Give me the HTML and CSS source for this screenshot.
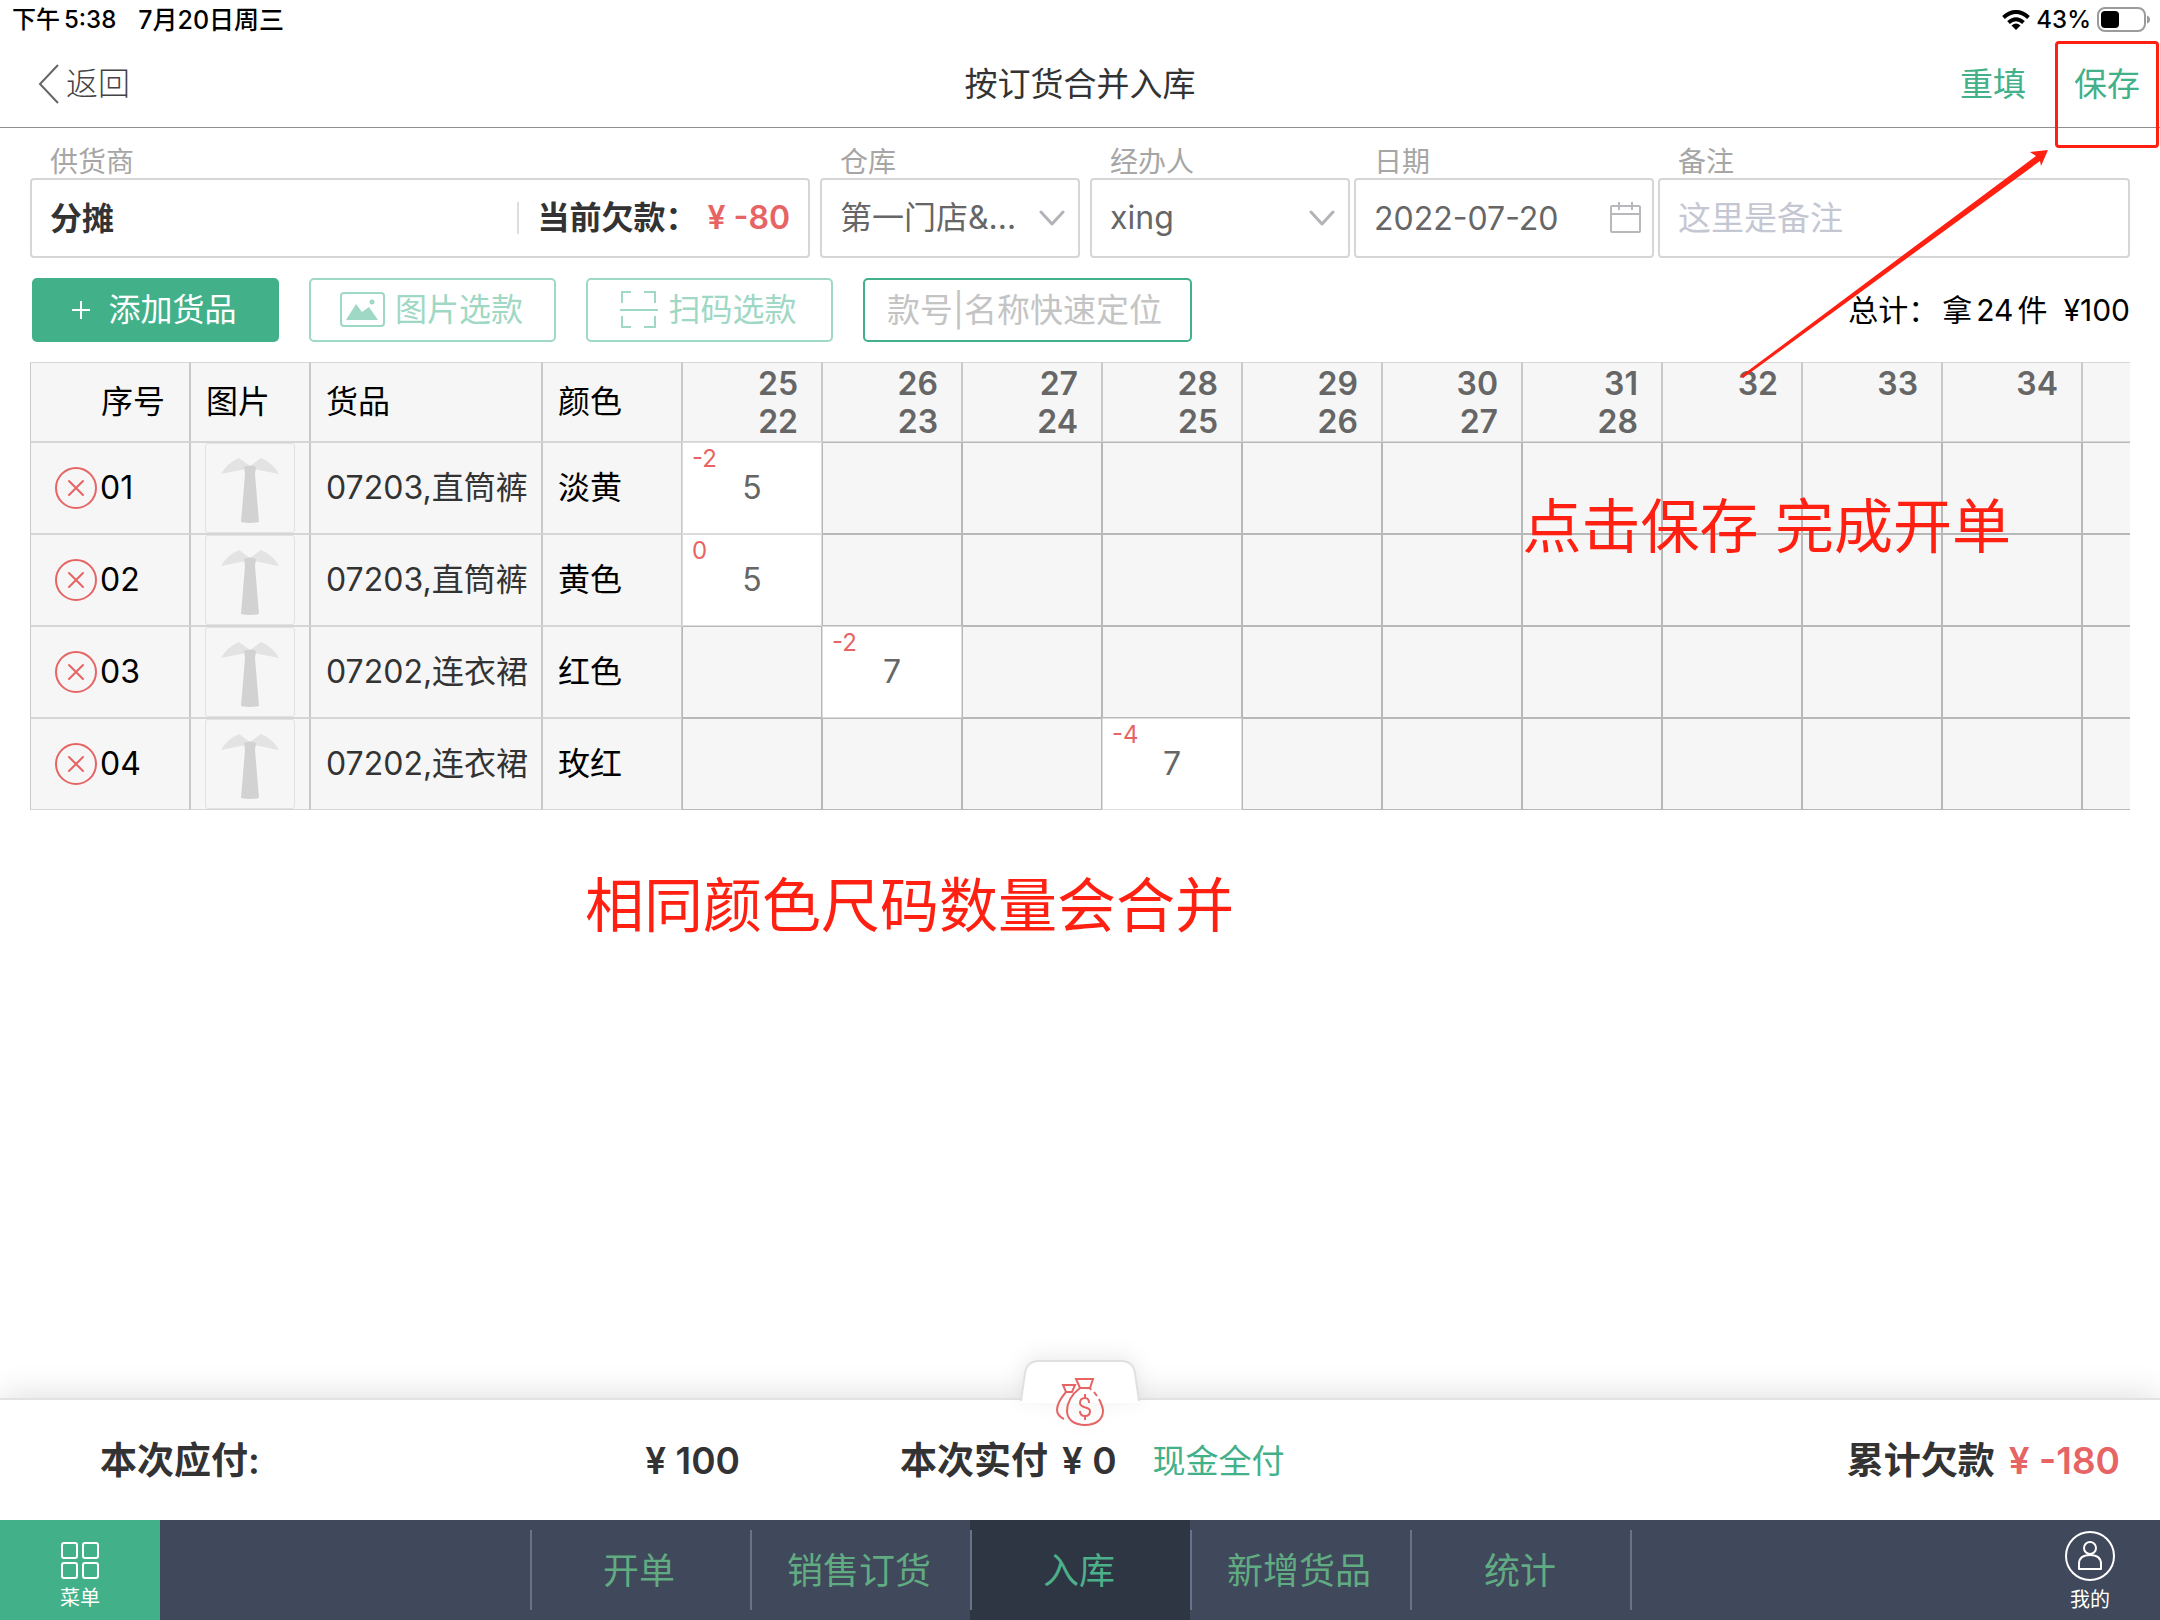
FILE: index.html
```html
<!DOCTYPE html>
<html lang="zh-CN">
<head>
<meta charset="utf-8">
<meta name="viewport" content="width=device-width, initial-scale=1">
<title>按订货合并入库</title>
<link rel="stylesheet" href="styles.css">
</head>
<body>
<svg class="defs" aria-hidden="true">
  <symbol id="tie" viewBox="0 0 88 88">
    <path d="M44 22 33 14Q21 19 15 30L40 25ZM44 22 55 14Q67 19 73 30L48 25Z" fill="#e3e3e3"/>
    <path d="M38 23Q44 20 50 23L49 30 53 78Q44 80 35 78L39 30Z" fill="#d2d2d2"/>
  </symbol>
  <symbol id="remove" viewBox="0 0 42 42">
    <circle cx="21" cy="21" r="20" fill="none" stroke="#e66464" stroke-width="2"/>
    <path d="M14 14 28 28M28 14 14 28" stroke="#e66464" stroke-width="2" stroke-linecap="round"/>
  </symbol>
  <symbol id="chevron" viewBox="0 0 26 16">
    <path d="M2 2 13 14 24 2" fill="none" stroke="#b2b3b8" stroke-width="3" stroke-linecap="round" stroke-linejoin="round"/>
  </symbol>
</svg>

<div class="page">
  <div class="status">
    <div class="status-group status-time"><span>下午</span><span>5:38</span><span class="status-date">7月20日周三</span></div>
    <div class="status-group status-system">
      <svg width="28" height="20" viewBox="0 0 28 20" fill="none" stroke="#000" stroke-width="4" aria-label="Wi-Fi">
        <path d="M1.5 7.5Q14-3.500 26.500 7.500M6.500 12.500Q14 6 21.500 12.500"/>
        <path d="M14 20 9.500 15.500Q14 11.500 18.500 15.500Z" fill="#000" stroke="none"/>
      </svg>
      <span>43%</span>
      <svg width="54" height="26" viewBox="0 0 54 26" aria-label="电量">
        <rect x="1" y="1" width="47" height="23" rx="7" fill="none" stroke="#9b9b9b" stroke-width="2"/>
        <rect x="4" y="4" width="18" height="17" rx="4"/>
        <path d="M50 8.500Q53 9.500 53 12.500 53 15.500 50 16.500Z" fill="#9b9b9b"/>
      </svg>
    </div>
  </div>

  <header class="header">
    <a class="back" href="#back">
      <svg width="22" height="40" viewBox="0 0 22 40" fill="none" stroke="#666" stroke-width="2"><path d="M20 1 2 20 20 39"/></svg>
      <span>返回</span>
    </a>
    <h1 class="title">按订货合并入库</h1>
    <div class="header-actions">
      <button type="button" class="text-button">重填</button>
      <button type="button" class="text-button">保存</button>
    </div>
  </header>

  <main class="main">
    <form class="fields">
      <div class="field field-supplier">
        <label for="supplier">供货商</label>
        <div class="box">
          <input id="supplier" class="strong" type="text" value="分摊">
          <div class="debt"><span>当前欠款：</span><span class="red">¥ -80</span></div>
        </div>
      </div>
      <div class="field field-store">
        <label for="store">仓库</label>
        <div class="box">
          <select id="store"><option>第一门店&amp;…</option></select>
          <svg class="chevron" width="26" height="16"><use href="#chevron"/></svg>
        </div>
      </div>
      <div class="field field-handler">
        <label for="handler">经办人</label>
        <div class="box">
          <select id="handler"><option>xing</option></select>
          <svg class="chevron" width="26" height="16"><use href="#chevron"/></svg>
        </div>
      </div>
      <div class="field field-date">
        <label for="date">日期</label>
        <div class="box">
          <input id="date" type="text" value="2022-07-20">
          <svg class="calendar" width="32" height="32" viewBox="0 0 32 32" fill="none" stroke="#b6b8bc" stroke-width="2"><rect x="1" y="4" width="29" height="26" rx="1"/><path d="M1 12H30M9 0V8M22 0V8"/></svg>
        </div>
      </div>
      <div class="field field-remark">
        <label for="remark">备注</label>
        <div class="box"><input id="remark" type="text" placeholder="这里是备注"></div>
      </div>
    </form>

    <div class="toolbar">
      <button type="button" class="tool tool-primary"><svg width="18" height="18" viewBox="0 0 18 18" stroke="#fff" stroke-width="2"><path d="M0 9H18M9 0V18"/></svg><span>添加货品</span></button>
      <button type="button" class="tool">
        <svg width="45" height="36" viewBox="0 0 45 36" fill="none" stroke="#9fd8c4" stroke-width="2"><rect x="1" y="1" width="43" height="33" rx="3"/><path d="M6 28 16 12 22 20 29 15 38 28Z" fill="#9fd8c4" stroke="none"/><circle cx="32" cy="10" r="2.500" fill="#9fd8c4" stroke="none"/></svg>
        <span>图片选款</span>
      </button>
      <button type="button" class="tool">
        <svg width="38" height="38" viewBox="0 0 38 38" fill="none" stroke="#9fd8c4" stroke-width="2"><path d="M11 1H2V12M24 1H35V12M2 25V36H11M24 36H35V25M0 19H38"/></svg>
        <span>扫码选款</span>
      </button>
      <input class="search" type="text" aria-label="快速定位" placeholder="款号|名称快速定位">
      <p class="summary"><span>总计：</span><span>拿</span><span>24</span><span>件</span><span class="amount">¥100</span></p>
    </div>

    <div class="table-wrap">
      <table class="goods">
        <colgroup><col class="c-no"><col class="c-pic"><col class="c-name"><col class="c-color"><col span="11" class="c-size"></colgroup>
        <thead>
          <tr>
            <th class="no">序号</th><th>图片</th><th>货品</th><th>颜色</th>
            <th class="size">25<br>22</th><th class="size">26<br>23</th><th class="size">27<br>24</th><th class="size">28<br>25</th><th class="size">29<br>26</th><th class="size">30<br>27</th><th class="size">31<br>28</th><th class="size">32</th><th class="size">33</th><th class="size">34</th><th class="size"></th>
          </tr>
        </thead>
        <tbody>
          <tr>
            <td class="no"><div><button type="button" class="remove" aria-label="删除"><svg width="42" height="42"><use href="#remove"/></svg></button><span>01</span></div></td>
            <td class="pic"><svg class="thumb"><use href="#tie"/></svg></td>
            <td class="name">07203,直筒裤</td><td>淡黄</td>
            <td class="qty open"><div><small>-2</small><input type="text" aria-label="数量" value="5"></div></td><td class="qty"></td><td class="qty"></td><td class="qty"></td><td class="qty"></td><td class="qty"></td><td class="qty"></td><td class="qty"></td><td class="qty"></td><td class="qty"></td><td class="qty"></td>
          </tr>
          <tr>
            <td class="no"><div><button type="button" class="remove" aria-label="删除"><svg width="42" height="42"><use href="#remove"/></svg></button><span>02</span></div></td>
            <td class="pic"><svg class="thumb"><use href="#tie"/></svg></td>
            <td class="name">07203,直筒裤</td><td>黄色</td>
            <td class="qty open"><div><small>0</small><input type="text" aria-label="数量" value="5"></div></td><td class="qty"></td><td class="qty"></td><td class="qty"></td><td class="qty"></td><td class="qty"></td><td class="qty"></td><td class="qty"></td><td class="qty"></td><td class="qty"></td><td class="qty"></td>
          </tr>
          <tr>
            <td class="no"><div><button type="button" class="remove" aria-label="删除"><svg width="42" height="42"><use href="#remove"/></svg></button><span>03</span></div></td>
            <td class="pic"><svg class="thumb"><use href="#tie"/></svg></td>
            <td class="name">07202,连衣裙</td><td>红色</td>
            <td class="qty"></td><td class="qty open"><div><small>-2</small><input type="text" aria-label="数量" value="7"></div></td><td class="qty"></td><td class="qty"></td><td class="qty"></td><td class="qty"></td><td class="qty"></td><td class="qty"></td><td class="qty"></td><td class="qty"></td><td class="qty"></td>
          </tr>
          <tr>
            <td class="no"><div><button type="button" class="remove" aria-label="删除"><svg width="42" height="42"><use href="#remove"/></svg></button><span>04</span></div></td>
            <td class="pic"><svg class="thumb"><use href="#tie"/></svg></td>
            <td class="name">07202,连衣裙</td><td>玫红</td>
            <td class="qty"></td><td class="qty"></td><td class="qty"></td><td class="qty open"><div><small>-4</small><input type="text" aria-label="数量" value="7"></div></td><td class="qty"></td><td class="qty"></td><td class="qty"></td><td class="qty"></td><td class="qty"></td><td class="qty"></td><td class="qty"></td>
          </tr>
        </tbody>
      </table>
    </div>
  </main>

  <section class="pay">
    <button type="button" class="pay-tab" aria-label="付款">
      <svg class="pay-shape" width="122" height="44" viewBox="0 0 122 44"><path d="M2 42 6 14Q8 2 20 2H102Q114 2 116 14L120 42V44H2Z" fill="#fff"/><path d="M2 42 6 14Q8 2 20 2H102Q114 2 116 14L120 42" fill="none" stroke="#e0e0e0" stroke-width="2"/></svg>
      <svg class="pay-icon" width="50" height="50" viewBox="0 0 50 50" fill="none" stroke="#e66464" stroke-width="2">
        <path d="M21 2H38L35 11H25ZM25 11C16 18 12 25 12 34 12 43 20 48 30 48S48 43 48 34C48 30 46 26 44 22M35 11 36 13M39 15 42 19"/>
        <path d="M8 8H20L17 15H11ZM11 15C5 22 2 27 2 33 2 37 5 40 9 42"/>
        <path d="M34 26C34 22 32 21 30 21 27 21 25 23 25 26 25 32 35 29 35 34 35 37 33 39 30 39 27 39 25 37 25 34M30 17V21M30 39V43"/>
      </svg>
    </button>
    <div class="due"><span>本次应付:</span><span>¥ 100</span></div>
    <div class="balance">
      <div class="paid"><span>本次实付</span><span>¥ 0</span><button type="button" class="text-button cash">现金全付</button></div>
      <div class="total"><span>累计欠款</span><span class="red">¥ -180</span></div>
    </div>
  </section>

  <nav class="nav">
    <a class="nav-end nav-menu" href="#menu">
      <svg width="38" height="38" viewBox="0 0 38 38" fill="none" stroke="#fff" stroke-width="2"><rect x="1" y="1" width="15" height="15" rx="2"/><rect x="22" y="1" width="15" height="15" rx="2"/><rect x="1" y="21" width="15" height="15" rx="2"/><rect x="22" y="21" width="15" height="15" rx="2"/></svg>
      <span>菜单</span>
    </a>
    <div class="nav-items">
      <a href="#order">开单</a><a href="#sales">销售订货</a><a class="active" href="#stock">入库</a><a href="#new">新增货品</a><a href="#stats">统计</a>
    </div>
    <a class="nav-end nav-mine" href="#mine">
      <svg width="52" height="52" viewBox="0 0 52 52" fill="none" stroke="#fff" stroke-width="2"><circle cx="26" cy="26" r="24"/><circle cx="26" cy="18" r="6"/><path d="M15 39V34Q15 25 26 25T37 34V39Z" stroke-linejoin="round"/></svg>
      <span>我的</span>
    </a>
  </nav>

  <div class="mark-box"></div>
  <svg class="mark-arrow" width="310" height="230" viewBox="0 0 310 230"><path d="M1 227 296 7 290 3 308 1 301 17 300 12 3 229Z" fill="#ff2012"/></svg>
  <p class="note note-save">点击保存 完成开单</p>
  <p class="note note-merge">相同颜色尺码数量会合并</p>
</div>
</body>
</html>
```
FILE: styles.css
```css
* {
  box-sizing: border-box;
}

body,
h1,
p {
  margin: 0;
}

body,
button,
input,
select {
  font-family: Inter, "Noto Sans CJK SC", sans-serif;
}

body {
  background: #fff;
  color: #333;
  font-size: 32px;
  line-height: 40px;
}

button,
input,
select {
  padding: 0;
  border: 0;
  outline: 0;
  background: none;
  color: inherit;
  font-size: inherit;
  line-height: inherit;
  appearance: none;
}

a {
  color: inherit;
  text-decoration: none;
}

svg {
  display: block;
  flex: none;
}

.defs {
  position: absolute;
  width: 0;
  height: 0;
}

.red {
  color: #e66464;
}

.page {
  position: relative;
  display: flex;
  flex-direction: column;
  min-height: 100vh;
  overflow: hidden;
}

/* device status bar */
.status {
  display: flex;
  justify-content: space-between;
  height: 40px;
  padding: 0 9px 0 12px;
  color: #000;
  font-size: 24px;
  font-weight: 500;
}

.status-group {
  display: flex;
  align-items: center;
  height: 40px;
}

.status-time {
  gap: 4px;
}

.status-date {
  margin-left: 18px;
  font-size: 25px;
}

.status-system {
  gap: 6px;
}

/* title bar */
.header {
  display: grid;
  grid-template-columns: 1fr auto 1fr;
  align-items: center;
  height: 88px;
  border-bottom: 1px solid #8f8f8f;
}

.back {
  display: flex;
  align-items: center;
  gap: 6px;
  padding-left: 38px;
  color: #444;
  font-weight: 300;
}

.title {
  font-size: 33px;
  font-weight: 400;
}

.header-actions {
  display: flex;
  justify-content: flex-end;
  gap: 48px;
  padding-right: 20px;
}

.text-button {
  color: #42b189;
  font-size: 33px;
}

.main {
  flex: 1;
  padding: 16px 30px;
}

/* order fields */
.fields {
  display: flex;
  gap: 4px;
}

.field {
  min-width: 0;
}

.field-supplier {
  flex: 780 1 0;
  margin-right: 6px;
}

.field-store {
  flex: 260 1 0;
  margin-right: 6px;
}

.field-handler {
  flex: 260 1 0;
}

.field-date {
  flex: 300 1 0;
}

.field-remark {
  flex: 472 1 0;
}

.field label {
  display: block;
  padding: 2px 0 0 20px;
  color: #a6a6a6;
  font-size: 28px;
  line-height: 32px;
}

.box {
  display: flex;
  align-items: center;
  height: 80px;
  padding-left: 18px;
  border: 2px solid #d6d6d6;
  border-radius: 4px;
  color: #666;
}

.box input,
.box select {
  flex: 1;
  min-width: 0;
  height: 76px;
}

.box .strong {
  padding-bottom: 4px;
  color: #333;
  font-weight: 600;
}

input::placeholder {
  color: #c4c7d2;
  font-size: 33px;
  opacity: 1;
}

.debt {
  display: flex;
  align-items: center;
  gap: 10px;
  height: 32px;
  padding: 0 18px 0 18px;
  border-left: 2px solid #ddd;
  color: #333;
  font-weight: 600;
}

.chevron {
  margin-right: 13px;
}

.calendar {
  margin-right: 10px;
}

/* toolbar */
.toolbar {
  display: flex;
  align-items: center;
  gap: 30px;
  padding: 20px 0 20px 2px;
}

.tool {
  display: flex;
  align-items: center;
  justify-content: center;
  gap: 10px;
  width: 247px;
  height: 64px;
  padding-right: 2px;
  border: 2px solid #9fd8c4;
  border-radius: 5px;
  color: #9fd8c4;
}

.tool-primary {
  gap: 18px;
  border-color: #42b189;
  background: #42b189;
  color: #fff;
}

.search {
  width: 329px;
  height: 64px;
  padding: 0 22px;
  border: 2px solid #42b189;
  border-radius: 5px;
}

.search::placeholder {
  color: #c4c4c4;
}

.summary {
  display: flex;
  gap: 4px;
  margin-left: auto;
  color: #000;
  font-size: 30px;
}

.amount {
  margin-left: 12px;
}

/* goods table */
.table-wrap {
  overflow: hidden;
}

.goods {
  width: 2192px;
  table-layout: fixed;
  border-collapse: separate;
  border-spacing: 0;
  color: #000;
}

.c-no {
  width: 160px;
}

.c-pic {
  width: 120px;
}

.c-name {
  width: 232px;
}

.c-color,
.c-size {
  width: 140px;
}

.goods th,
.goods td {
  padding: 0 0 0 15px;
  border: 1px solid;
  border-color: #d5d7d7 #c8c9c9;
  background: #f6f6f6;
  font-weight: 400;
  text-align: left;
  white-space: nowrap;
}

.goods th {
  height: 80px;
}

.goods td {
  height: 92px;
}

.goods th.no {
  padding-left: 70px;
}

.goods td.no {
  padding-left: 24px;
}

.no div {
  display: flex;
  align-items: center;
  gap: 3px;
}

.goods .size {
  padding: 2px 23px 0 0;
  color: #666;
  font-weight: 600;
  line-height: 38px;
  text-align: right;
  vertical-align: top;
}

.goods .pic {
  padding: 0 14px;
}

.goods .name {
  color: #333;
}

.goods .qty {
  padding: 0;
  border-color: #b8b8b8;
}

.goods .open {
  border-color: #dcdcdc;
  background: #fff;
  color: #666;
}

.thumb {
  width: 90px;
  height: 90px;
  border: 1px solid #e2e2e2;
  border-radius: 3px;
}

.open div {
  display: flex;
  flex-direction: column;
  height: 90px;
}

.open small {
  padding-left: 9px;
  color: #e66464;
  font-size: 24px;
  line-height: 32px;
}

.open input {
  width: 100%;
  height: 26px;
  text-align: center;
}

/* payment bar */
.pay {
  position: relative;
  display: grid;
  grid-template-columns: 32fr 61fr;
  column-gap: 160px;
  align-items: center;
  height: 120px;
  padding: 2px 40px 0 100px;
  background: #fff;
  box-shadow: 0 -2px 0 #e2e2e2, 0 -6px 30px rgba(0, 0, 0, 0.12);
  font-size: 37px;
  font-weight: 600;
}

.pay-tab {
  position: absolute;
  bottom: 93px;
  left: 50%;
  display: grid;
  justify-items: center;
  margin-left: -61px;
  filter: drop-shadow(0 -4px 10px rgba(0, 0, 0, 0.08));
}

.pay-shape,
.pay-icon {
  grid-area: 1 / 1;
}

.pay-icon {
  align-self: start;
  margin-top: 18px;
}

.due,
.balance {
  display: flex;
  align-items: center;
  justify-content: space-between;
}

.paid,
.total {
  display: flex;
  align-items: center;
  gap: 14px;
}

.cash {
  margin-left: 22px;
  font-weight: 400;
}

/* bottom navigation */
.nav {
  position: relative;
  display: flex;
  justify-content: space-between;
  height: 100px;
  background: #40485b;
}

.nav-end {
  display: flex;
  flex-direction: column;
  align-items: center;
  color: #fff;
  font-size: 20px;
}

.nav-menu {
  gap: 4px;
  width: 160px;
  padding-top: 22px;
  background: #42b189;
}

.nav-mine {
  width: 140px;
  padding-top: 10px;
  gap: 4px;
}

.nav-end span {
  line-height: 28px;
}

.nav-items {
  position: absolute;
  left: 50%;
  display: flex;
  margin-left: -550px;
}

.nav-items a {
  display: flex;
  align-items: center;
  justify-content: center;
  width: 220px;
  height: 100px;
  padding: 2px 2px 0 0;
  color: #60ab82;
  font-size: 36px;
  background: linear-gradient(#667389, #667389) left center / 2px 80px no-repeat;
}

.nav-items a:last-child {
  width: 222px;
  background-image: linear-gradient(#667389, #667389), linear-gradient(#667389, #667389);
  background-position: left center, right center;
}

.nav-items .active {
  background-color: #2f3643;
  color: #4cb08a;
}

/* tutorial marks drawn over the screen */
.mark-box {
  position: absolute;
  top: 41px;
  right: 1px;
  width: 104px;
  height: 107px;
  border: 3px solid #ff2012;
  border-radius: 4px;
}

.mark-arrow {
  position: absolute;
  top: 149px;
  right: 110px;
}

.note {
  position: absolute;
  color: #ff2012;
  font-size: 59px;
  line-height: 80px;
  white-space: nowrap;
}

.note-save {
  top: 487px;
  right: 149px;
}

.note-merge {
  top: 866px;
  left: 585px;
}
```
